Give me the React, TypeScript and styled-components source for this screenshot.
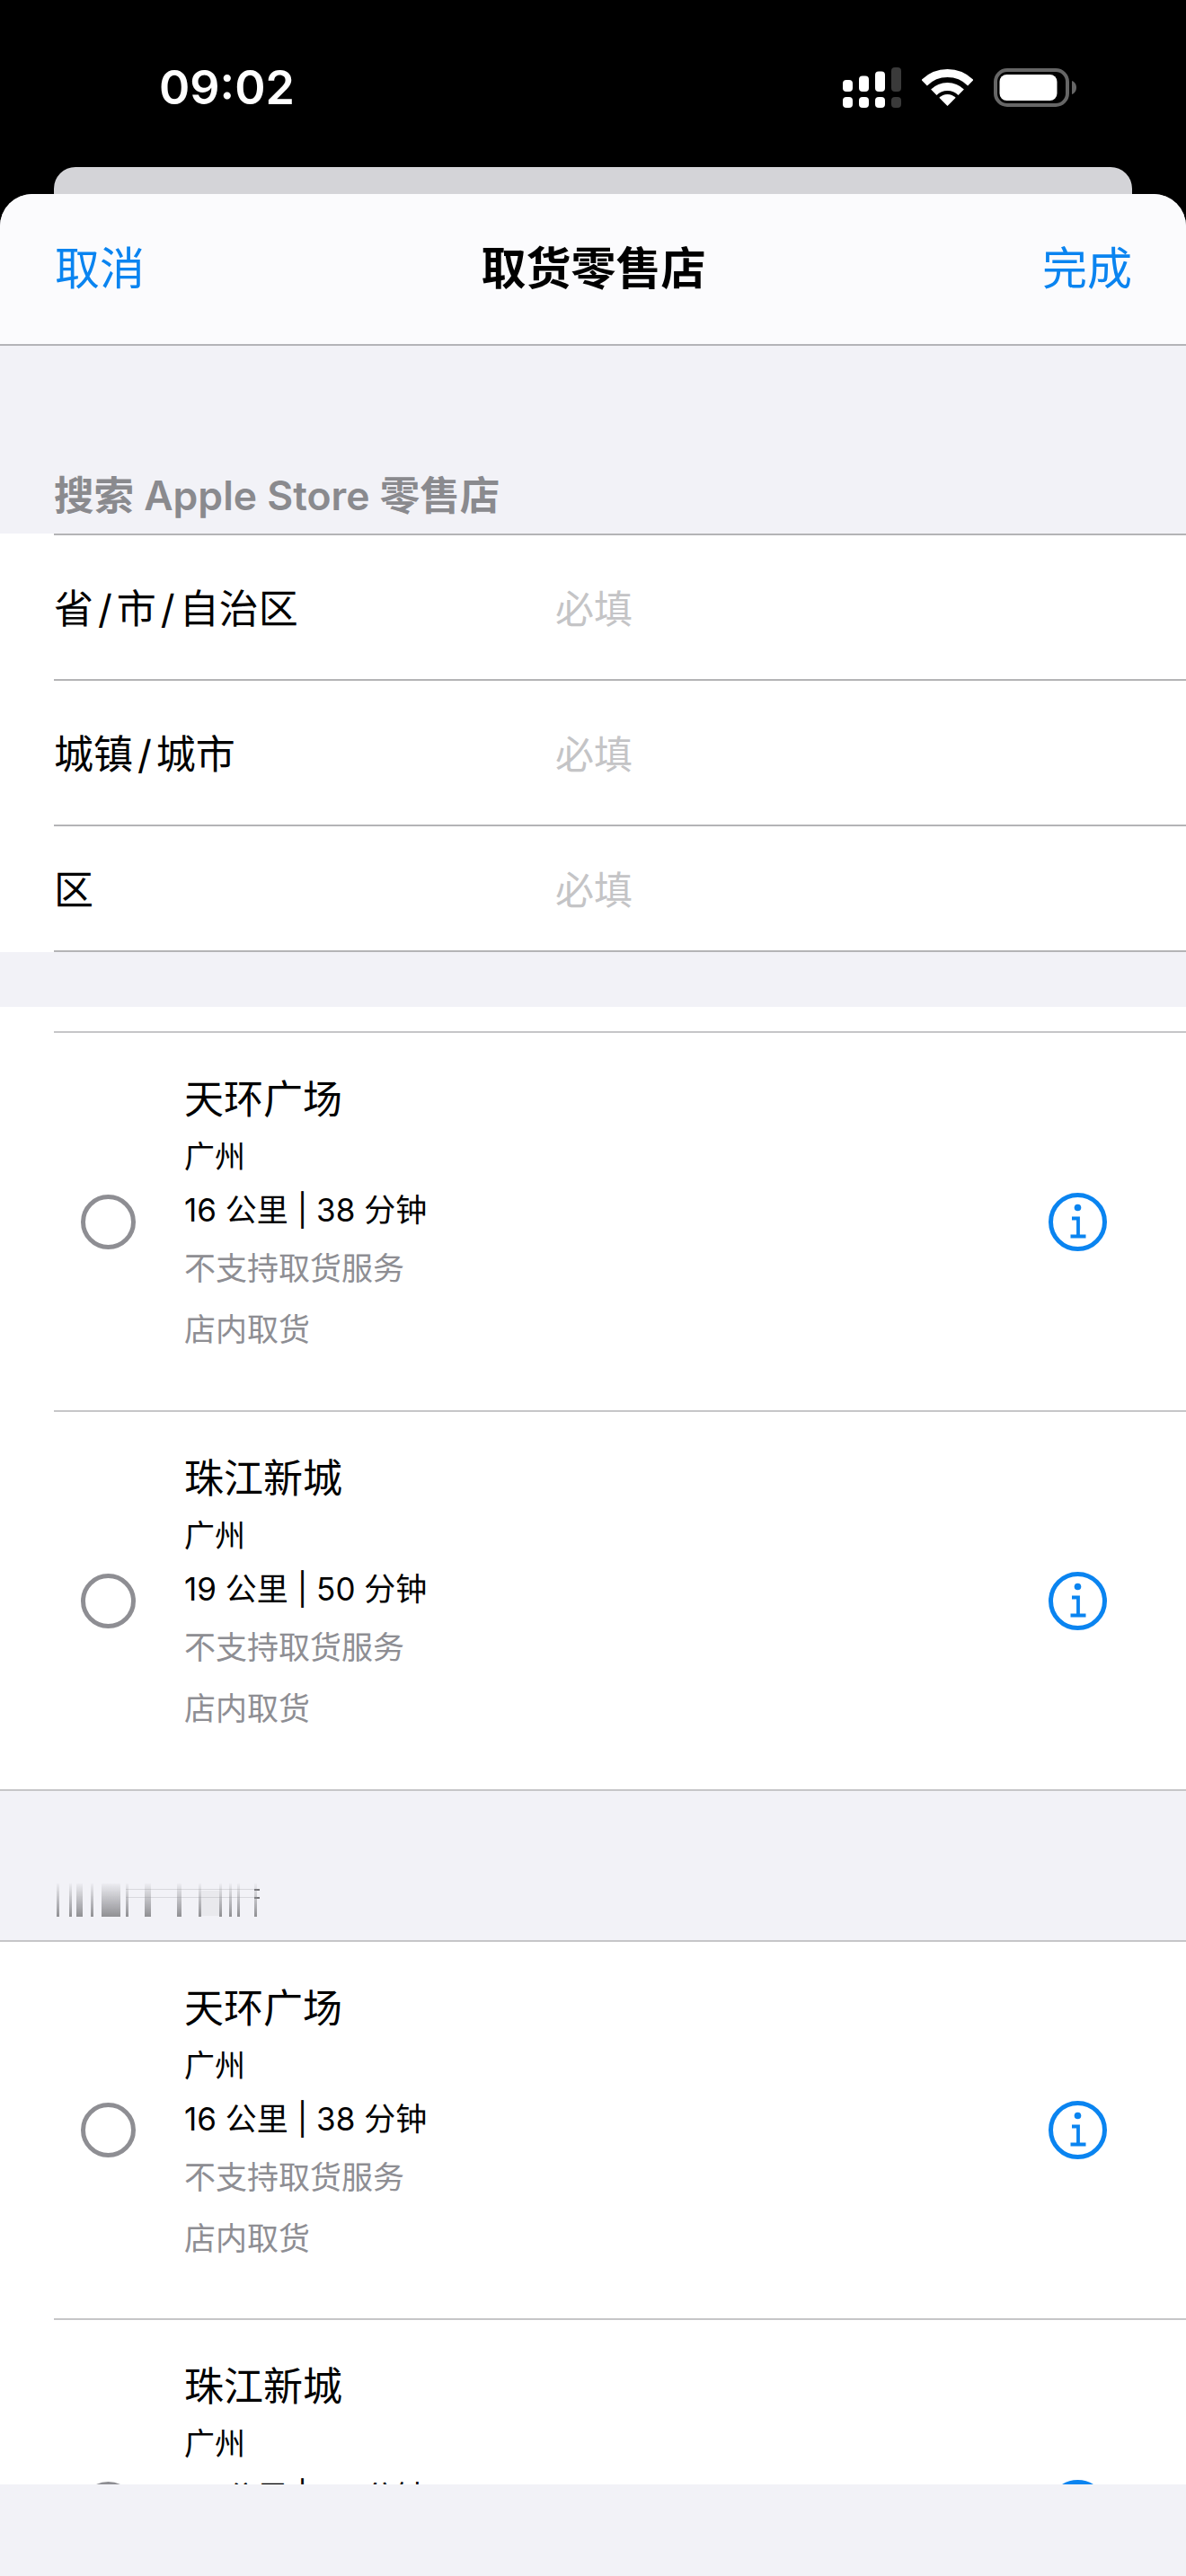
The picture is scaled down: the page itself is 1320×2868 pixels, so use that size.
import React from 'react';
import styled, { createGlobalStyle } from 'styled-components';

const GlobalStyle = createGlobalStyle`
  html, body {
    margin: 0;
    background: #000;
    font-family: Inter, 'Noto Sans CJK SC', sans-serif;
  }
`;

const stores = [
  { name: '天环广场', distance: '16 公里 | 38 分钟' },
  { name: '珠江新城', distance: '19 公里 | 50 分钟' },
];

const fields = [
  { parts: ['省', '市', '自治区'], height: 162 },
  { parts: ['城镇', '城市'], height: 162 },
  { parts: ['区'], height: 142 },
];

const blurBars = [
  [63, 3], [77, 3], [85, 7], [101, 3], [113, 21], [140, 3], [161, 7],
  [197, 5], [221, 3], [244, 3], [255, 3], [264, 3], [283, 3],
];

const SignalIcon = () => (
  <svg width="65" height="45" viewBox="0 0 65 45">
    <rect x="0" y="14" width="11" height="13" rx="4" fill="#fff" />
    <rect x="18" y="9.5" width="11" height="17.5" rx="4" fill="#fff" />
    <rect x="36" y="4.5" width="11" height="22.5" rx="4" fill="#fff" />
    <rect x="54" y="0" width="11" height="27" rx="4" fill="#3a3a3a" />
    <rect x="0" y="33" width="11" height="12" rx="4" fill="#fff" />
    <rect x="18" y="33" width="11" height="12" rx="4" fill="#fff" />
    <rect x="36" y="33" width="11" height="12" rx="4" fill="#fff" />
    <rect x="54" y="33" width="11" height="12" rx="4" fill="#3a3a3a" />
  </svg>
);

const WifiIcon = () => (
  <svg width="57" height="41" viewBox="0 0 57 41" fill="none">
    <path d="M2.7 15.2A36.5 36.5 0 0 1 54.3 15.2" stroke="#fff" strokeWidth="9" />
    <path d="M13.3 25.8A21.5 21.5 0 0 1 43.7 25.8" stroke="#fff" strokeWidth="9" />
    <path d="M28.5 41L19.3 31.8A13 13 0 0 1 37.7 31.8Z" fill="#fff" />
  </svg>
);

const BatteryIcon = () => (
  <svg width="92" height="43" viewBox="0 0 92 43">
    <rect x="2" y="2" width="80" height="39" rx="13" fill="none" stroke="#666" strokeWidth="4" />
    <rect x="6.5" y="7" width="64" height="29" rx="8" fill="#fff" />
    <path d="M87 14c3 1 5 4 5 7.500s-2 6.500-5 7.500z" fill="#666" />
  </svg>
);

const RadioIcon = () => (
  <svg width="61" height="61" viewBox="0 0 61 61" fill="none">
    <circle cx="30.500" cy="30.500" r="28" stroke="#8e8e93" strokeWidth="5" />
  </svg>
);

const InfoIcon = () => (
  <svg width="65" height="65" viewBox="0 0 65 65" fill="none">
    <circle cx="32.500" cy="32.500" r="30" stroke="#0a84f0" strokeWidth="5" />
    <circle cx="32.500" cy="16.500" r="3.800" fill="#0a84f0" />
    <path d="M26 28.500h7v20M24.500 48.500h17" stroke="#0a84f0" strokeWidth="3.800" />
  </svg>
);

const BlurredHeading = () => (
  <BlurredSvg width="232" height="37" viewBox="60 0 232 37">
    <defs>
      <linearGradient id="fade" x1="0" y1="0" x2="0" y2="1">
        <stop offset="0" stopColor="#8a8a8e" stopOpacity="0.05" />
        <stop offset="1" stopColor="#8a8a8e" stopOpacity="0.95" />
      </linearGradient>
    </defs>
    <rect x="224" y="8" width="20" height="28" fill="#e9e9ed" />
    <rect x="140" y="6" width="148" height="1" fill="#8a8a8e" opacity="0.25" />
    <rect x="140" y="15" width="148" height="1" fill="#8a8a8e" opacity="0.25" />
    <rect x="283" y="6" width="6" height="2" fill="#77777b" />
    <rect x="283" y="15" width="6" height="2" fill="#77777b" />
    {blurBars.map(([x, w]) => (
      <rect key={x} x={x} y="0" width={w} height="37" fill="url(#fade)" />
    ))}
  </BlurredSvg>
);

const StoreItem: React.FC<{ name: string; distance: string; ruled?: boolean }> = ({
  name,
  distance,
  ruled,
}) => (
  <StoreRow $ruled={ruled}>
    <RadioIcon />
    <StoreText>
      <StoreName>{name}</StoreName>
      <StoreCity>广州</StoreCity>
      <StoreDistance>{distance}</StoreDistance>
      <StoreNote>不支持取货服务</StoreNote>
      <StorePickup>店内取货</StorePickup>
    </StoreText>
    <InfoIcon />
  </StoreRow>
);

const App: React.FC = () => (
  <Page>
    <GlobalStyle />
    <StatusBar>
      <Clock>09:02</Clock>
      <StatusIcons>
        <SignalIcon />
        <WifiIcon />
        <BatteryIcon />
      </StatusIcons>
    </StatusBar>
    <BackCard />
    <Sheet>
      <NavBar>
        <NavButton>取消</NavButton>
        <NavTitle>取货零售店</NavTitle>
        <NavButton>完成</NavButton>
      </NavBar>
      <ScrollArea>
        <SectionHeading>搜索 Apple Store 零售店</SectionHeading>
        <FormList>
          {fields.map((field) => (
            <FormRow key={field.parts.join('/')} $height={field.height}>
              <FieldLabel>
                {field.parts.map((part, index) => (
                  <React.Fragment key={part}>
                    {index > 0 && <Slash>/</Slash>}
                    {part}
                  </React.Fragment>
                ))}
              </FieldLabel>
              <FieldPlaceholder>必填</FieldPlaceholder>
            </FormRow>
          ))}
        </FormList>
        <SectionGap />
        <StoreList $closed>
          {stores.map((store) => (
            <StoreItem key={store.name} {...store} ruled />
          ))}
        </StoreList>
        <BlurredHeader>
          <BlurredHeading />
        </BlurredHeader>
        <StoreList>
          {stores.map((store, index) => (
            <StoreItem key={store.name} {...store} ruled={index > 0} />
          ))}
        </StoreList>
      </ScrollArea>
      <BottomBar />
    </Sheet>
  </Page>
);

export default App;

const Page = styled.div`
  width: 1320px;
  height: 2868px;
  display: flex;
  flex-direction: column;
  overflow: hidden;
  background: #000;
`;

const StatusBar = styled.div`
  height: 186px;
  flex: none;
  box-sizing: border-box;
  padding: 74px 122px 0 177px;
  display: flex;
  justify-content: space-between;
  align-items: flex-start;
`;

const Clock = styled.div`
  color: #fff;
  font-size: 52px;
  font-weight: 600;
  line-height: 48px;
`;

const StatusIcons = styled.div`
  display: flex;
  align-items: center;
  gap: 23px;
  margin-top: 1px;
`;

const BackCard = styled.div`
  height: 30px;
  flex: none;
  margin: 0 60px;
  background: #d4d4d8;
  border-radius: 24px 24px 0 0;
`;

const Sheet = styled.div`
  flex: 1;
  min-height: 0;
  display: flex;
  flex-direction: column;
  background: #f2f2f7;
  border-radius: 36px 36px 0 0;
  overflow: hidden;
`;

const NavBar = styled.div`
  height: 169px;
  flex: none;
  box-sizing: border-box;
  padding: 0 60px 2px 61px;
  display: flex;
  justify-content: space-between;
  align-items: center;
  background: #fbfbfd;
  border-bottom: 2px solid #b4b4b8;
`;

const NavButton = styled.div`
  color: #0a84f0;
  font-size: 50px;
  line-height: 60px;
`;

const NavTitle = styled.div`
  color: #000;
  font-size: 50px;
  font-weight: 600;
  line-height: 60px;
`;

const ScrollArea = styled.div`
  height: 2381px;
  flex: none;
  overflow: hidden;
`;

const SectionHeading = styled.div`
  height: 209px;
  box-sizing: border-box;
  padding: 141px 0 0 60px;
  color: #8a8a8e;
  font-size: 44.500px;
  font-weight: 600;
  line-height: 52px;
`;

const FormList = styled.div`
  padding-left: 60px;
  background: #fff;
`;

const FormRow = styled.div<{ $height: number }>`
  height: ${(p) => p.$height}px;
  box-sizing: border-box;
  padding-top: 4px;
  display: grid;
  grid-template-columns: 558px 1fr;
  align-items: center;
  border-top: 2px solid #b4b4b6;

  &:last-child {
    border-bottom: 2px solid #b4b4b6;
  }
`;

const FieldLabel = styled.div`
  color: #000;
  font-size: 44px;
  line-height: 60px;
`;

const Slash = styled.span`
  margin: 0 5px;
`;

const FieldPlaceholder = styled.div`
  color: #c4c4c6;
  font-size: 43px;
  line-height: 60px;
`;

const SectionGap = styled.div`
  height: 61px;
`;

const StoreList = styled.div<{ $closed?: boolean }>`
  padding-left: 60px;
  background: #fff;
  border-top: ${(p) => (p.$closed ? '0' : '2px solid #c6c6c8')};
  padding-top: ${(p) => (p.$closed ? '27px' : '0')};
  border-bottom: ${(p) => (p.$closed ? '2px solid #c6c6c8' : '0')};
`;

const StoreRow = styled.div<{ $ruled?: boolean }>`
  height: ${(p) => (p.$ruled ? '422px' : '419px')};
  box-sizing: border-box;
  padding: 0 88px 0 30px;
  display: grid;
  grid-template-columns: 115px 1fr auto;
  align-items: center;
  border-top: ${(p) => (p.$ruled ? '2px solid #c6c6c8' : '0')};
`;

const StoreText = styled.div`
  display: flex;
  flex-direction: column;
  padding-bottom: 18px;
`;

const StoreName = styled.div`
  color: #000;
  font-size: 44px;
  line-height: 60px;
`;

const StoreCity = styled.div`
  color: #000;
  font-size: 34px;
  line-height: 68px;
`;

const StoreDistance = styled.div`
  color: #000;
  font-size: 35px;
  line-height: 50px;
`;

const StoreNote = styled.div`
  color: #8e8e93;
  font-size: 35px;
  line-height: 80px;
`;

const StorePickup = styled.div`
  color: #8e8e93;
  font-size: 35px;
  line-height: 56px;
`;

const BlurredHeader = styled.div`
  height: 166px;
  box-sizing: border-box;
  padding: 103px 0 0 60px;
  background: #f2f2f7;
`;

const BlurredSvg = styled.svg`
  display: block;
  filter: blur(0.7px);
`;

const BottomBar = styled.div`
  flex: 1;
  background: #f2f2f7;
`;
